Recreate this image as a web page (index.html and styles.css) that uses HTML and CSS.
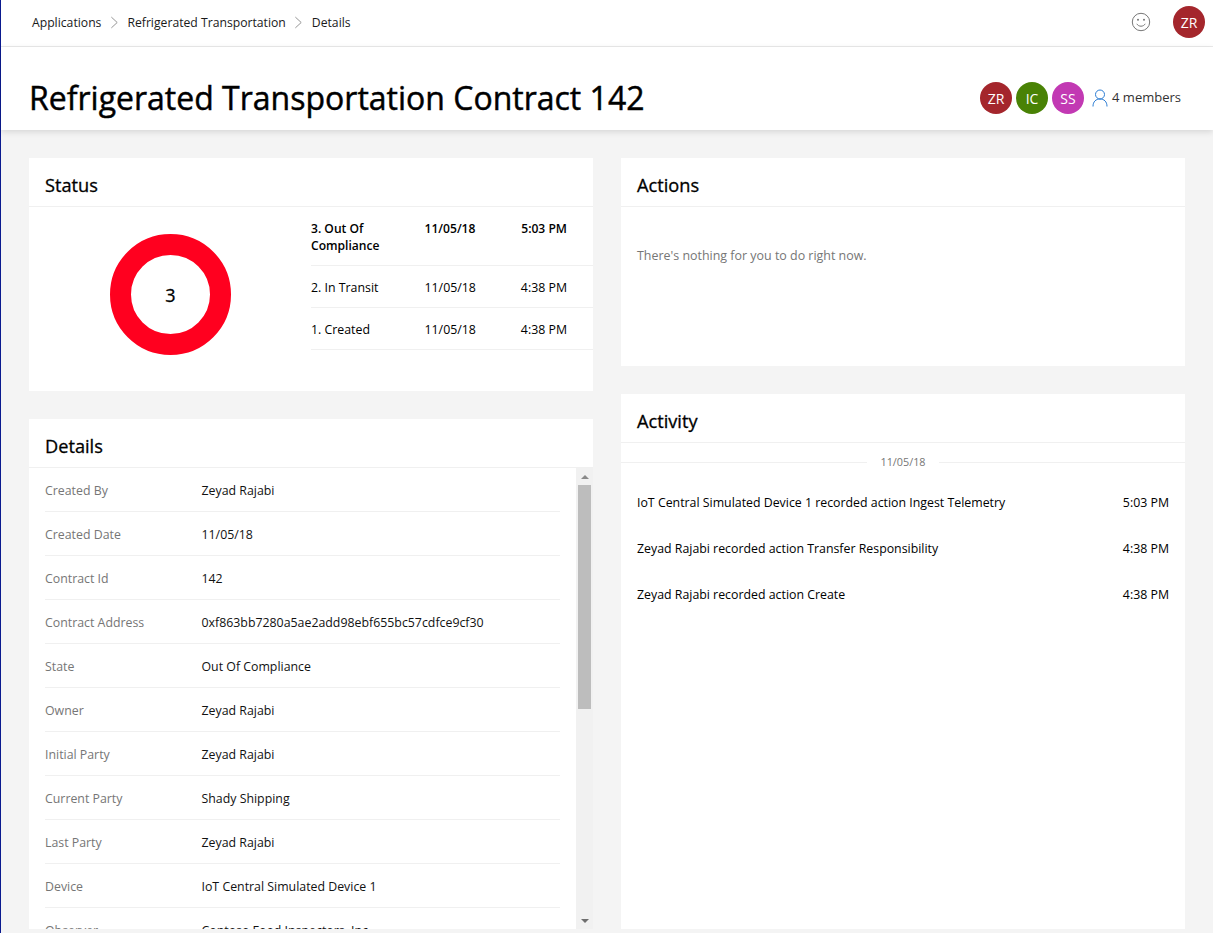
FILE: index.html
```html
<!DOCTYPE html>
<html lang="en">
<head>
<meta charset="utf-8">
<title>Refrigerated Transportation Contract 142</title>
<link rel="stylesheet" href="styles.css">
</head>
<body>
<div class="app">
  <header class="topbar">
    <nav class="crumbs">
      <span>Applications</span>
      <svg class="chev" viewBox="0 0 10 14"><path d="M1.5 1 L8 7 L1.5 13"/></svg>
      <span>Refrigerated Transportation</span>
      <svg class="chev" viewBox="0 0 10 14"><path d="M1.5 1 L8 7 L1.5 13"/></svg>
      <span>Details</span>
    </nav>
    <div class="top-right">
      <svg class="smile" viewBox="0 0 20 20"><circle cx="10" cy="10" r="8.7"/><path d="M5.8 11.8 C7.5 15 12.5 15 14.2 11.8"/><circle class="eye" cx="7" cy="7.8" r="1"/><circle class="eye" cx="13" cy="7.8" r="1"/></svg>
      <span class="avatar red">ZR</span>
    </div>
  </header>
  <section class="titlebar">
    <h1>Refrigerated Transportation Contract 142</h1>
    <div class="members">
      <span class="avatar red">ZR</span>
      <span class="avatar green">IC</span>
      <span class="avatar pink">SS</span>
      <svg class="person" viewBox="0 0 16 18"><circle cx="8" cy="5.5" r="4.5"/><path d="M1 17.5 C1 12.5 4 10 8 10 C12 10 15 12.5 15 17.5"/></svg>
      <span class="count">4 members</span>
    </div>
  </section>
  <main class="board">
    <div class="col">
      <section class="card status">
        <h2>Status</h2>
        <div class="status-body">
          <div class="donut-wrap"><div class="donut">3</div></div>
          <table class="stages">
            <tr class="current"><td class="st">3. Out Of Compliance</td><td class="dt">11/05/18</td><td class="tm">5:03 PM</td></tr>
            <tr><td class="st">2. In Transit</td><td class="dt">11/05/18</td><td class="tm">4:38 PM</td></tr>
            <tr><td class="st">1. Created</td><td class="dt">11/05/18</td><td class="tm">4:38 PM</td></tr>
          </table>
        </div>
      </section>
      <section class="card details">
        <h2>Details</h2>
        <div class="details-body">
          <div class="scroller">
            <dl class="props">
              <div class="prop"><dt>Created By</dt><dd>Zeyad Rajabi</dd></div>
              <div class="prop"><dt>Created Date</dt><dd>11/05/18</dd></div>
              <div class="prop"><dt>Contract Id</dt><dd>142</dd></div>
              <div class="prop"><dt>Contract Address</dt><dd>0xf863bb7280a5ae2add98ebf655bc57cdfce9cf30</dd></div>
              <div class="prop"><dt>State</dt><dd>Out Of Compliance</dd></div>
              <div class="prop"><dt>Owner</dt><dd>Zeyad Rajabi</dd></div>
              <div class="prop"><dt>Initial Party</dt><dd>Zeyad Rajabi</dd></div>
              <div class="prop"><dt>Current Party</dt><dd>Shady Shipping</dd></div>
              <div class="prop"><dt>Last Party</dt><dd>Zeyad Rajabi</dd></div>
              <div class="prop"><dt>Device</dt><dd>IoT Central Simulated Device 1</dd></div>
              <div class="prop"><dt>Observer</dt><dd>Contoso Food Inspectors, Inc</dd></div>
            </dl>
          </div>
          <div class="scrollbar">
            <span class="arrow up"></span>
            <span class="thumb-area"><span class="thumb"></span></span>
            <span class="arrow down"></span>
          </div>
        </div>
      </section>
    </div>
    <div class="col">
      <section class="card actions">
        <h2>Actions</h2>
        <p class="empty">There's nothing for you to do right now.</p>
      </section>
      <section class="card activity">
        <h2>Activity</h2>
        <div class="date-sep"><span>11/05/18</span></div>
        <ul class="feed">
          <li><span>IoT Central Simulated Device 1 recorded action Ingest Telemetry</span><time>5:03 PM</time></li>
          <li><span>Zeyad Rajabi recorded action Transfer Responsibility</span><time>4:38 PM</time></li>
          <li><span>Zeyad Rajabi recorded action Create</span><time>4:38 PM</time></li>
        </ul>
      </section>
    </div>
  </main>
</div>
</body>
</html>
```
FILE: styles.css
```css
* { box-sizing: border-box; }
html, body { margin: 0; height: 100%; overflow: hidden; }
body { font-family: "Open Sans", "Noto Sans", sans-serif; font-size: 12.35px; color: #000; background: #f4f4f4; }
.app { height: 933px; border-left: 1px solid #0a1a8f; display: flex; flex-direction: column; }
.topbar { height: 47px; flex: none; background: #fff; border-bottom: 1px solid #eaeaea; display: flex; align-items: center; justify-content: space-between; padding: 0 8px 2px 31px; }
.crumbs { display: flex; align-items: center; color: #1a1a1a; font-size: 12.2px; }
.chev { width: 9px; height: 13px; margin: 0 8.5px; }
.chev path { fill: none; stroke: #8a8a8a; stroke-width: 1; }
.top-right { display: flex; align-items: center; gap: 22px; }
.smile { width: 20px; height: 20px; fill: none; stroke: #777; stroke-width: 1; }
.smile .eye { fill: #777; stroke: none; }
.avatar { width: 32px; height: 32px; border-radius: 50%; display: inline-flex; align-items: center; justify-content: center; color: #fff; font-size: 14px; flex: none; }
.red { background: #a4262c; }
.green { background: #498205; }
.pink { background: #c239b3; }
.titlebar { height: 83px; flex: none; background: #fff; box-shadow: 0 2px 6px rgba(0,0,0,.12); display: flex; align-items: center; justify-content: space-between; padding: 19px 32px 0 28px; position: relative; }
h1 { margin: 0; font-size: 32px; font-weight: 400; line-height: 44px; white-space: nowrap; -webkit-text-stroke: .45px #000; }
.members { display: flex; align-items: center; gap: 4px; color: #333; }
.person { width: 16px; height: 18px; margin: 0 0 0 4px; fill: none; stroke: #2b7cd3; stroke-width: 1; }
.count { font-size: 13px; line-height: 16px; padding-bottom: 2px; }
.board { flex: 1; display: grid; grid-template-columns: 564px 564px; column-gap: 28px; padding: 28px 0 4px 28px; min-height: 0; }
.col { display: flex; flex-direction: column; gap: 28px; min-height: 0; }
.card { background: #fff; display: flex; flex-direction: column; }
h2 { margin: 0; height: 49px; flex: none; padding: 13px 16px 0; font-size: 18.2px; font-weight: 400; line-height: 28px; border-bottom: 1px solid #f0f0f0; -webkit-text-stroke: .3px #000; }
.status { height: 233px; }
.status-body { display: flex; }
.donut-wrap { width: 282px; flex: none; }
.donut { width: 121px; height: 121px; margin: 27px 0 0 81px; border: 21px solid #ff001f; border-radius: 50%; display: flex; align-items: center; justify-content: center; font-size: 18px; -webkit-text-stroke: .3px #000; }
.stages { flex: 1; border-collapse: collapse; height: 143px; align-self: flex-start; }
.stages td { padding: 13px 0 9px 0; border-bottom: 1px solid #f0f0f0; vertical-align: top; line-height: 17px; }
.stages .current td { font-weight: 600; font-size: 12.1px; }
.st { width: 113.5px; }
.dt { width: 96px; }
.tm { padding-right: 26px !important; text-align: right; }
.details { flex: 1; min-height: 0; }
.details-body { flex: 1; min-height: 0; display: flex; }
.scroller { flex: 1; min-width: 0; overflow: hidden; }
.scrollbar { width: 17px; flex: none; background: #f1f1f1; display: flex; flex-direction: column; }
.arrow { height: 17px; flex: none; display: flex; align-items: center; justify-content: center; }
.arrow::before { content: ""; border-left: 4px solid transparent; border-right: 4px solid transparent; }
.arrow.up::before { border-bottom: 4px solid #8a8a8a; }
.arrow.down::before { border-top: 4px solid #6e6e6e; }
.thumb-area { flex: 1; padding: 0 2px; min-height: 0; }
.thumb { display: block; height: 224px; background: #bdbdbd; }
.props { margin: 0; padding: 0 16px; }
.prop { height: 44px; display: flex; align-items: center; border-bottom: 1px solid #f0f0f0; padding-top: 2px; }
.prop dt { width: 156.5px; flex: none; color: #767676; }
.prop dd { margin: 0; color: #111; }
.actions { height: 208px; }
.empty { margin: 0; padding: 40px 16px 0; color: #767676; font-size: 12.45px; }
.activity { flex: 1; min-height: 0; }
.date-sep { height: 36px; position: relative; display: flex; align-items: flex-start; justify-content: center; }
.date-sep span { font-size: 10.8px; color: #767676; padding: 11px 14px 0; background: #fff; position: relative; line-height: 16px; height: 20px; }
.date-sep::before { content: ""; position: absolute; left: 0; right: 0; top: 19px; border-top: 1px solid #f0f0f0; }
.feed { list-style: none; margin: 0; padding: 0 16px; }
.feed li { height: 46px; display: flex; align-items: center; justify-content: space-between; }
```
